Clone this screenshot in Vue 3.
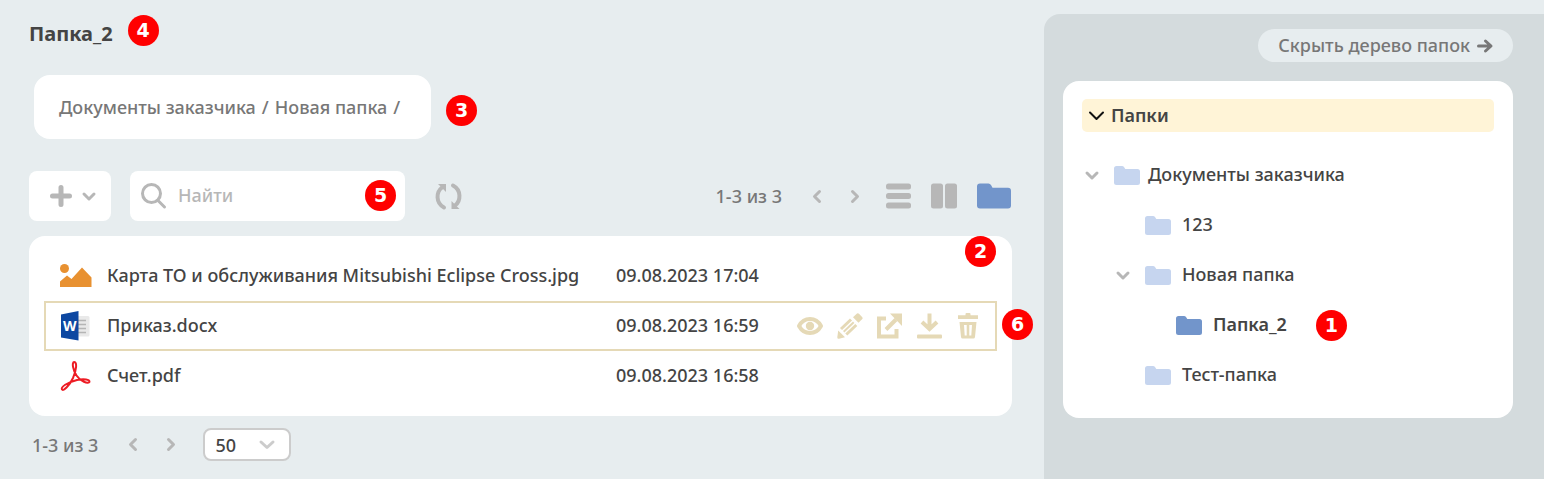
<script setup>
import { ref } from 'vue'

const files = [
  { kind: 'image', name: 'Карта ТО и обслуживания Mitsubishi Eclipse Cross.jpg', date: '09.08.2023 17:04' },
  { kind: 'word', name: 'Приказ.docx', date: '09.08.2023 16:59', active: true },
  { kind: 'pdf', name: 'Счет.pdf', date: '09.08.2023 16:58' },
]

const tree = [
  { name: 'Документы заказчика', level: 1, open: true },
  { name: '123', level: 2 },
  { name: 'Новая папка', level: 2, open: true },
  { name: 'Папка_2', level: 3, current: true, mark: 1 },
  { name: 'Тест-папка', level: 2 },
]

const query = ref('')
const pageSize = ref('50')
</script>

<template>
  <div class="page">
    <main class="main">
      <h1 class="title">Папка_2<span class="mark mark-title">4</span></h1>

      <nav class="crumbs" aria-label="Путь">
        <a href="#">Документы заказчика</a><span>/</span><a href="#">Новая папка</a><span>/</span>
        <b class="mark mark-crumbs">3</b>
      </nav>

      <div class="toolbar">
        <button class="add" type="button" aria-label="Добавить">
          <svg width="22" height="22" viewBox="0 0 22 22"><path d="M11 2.500v17M2.500 11h17" class="ln w5" /></svg>
          <svg width="14" height="9" viewBox="0 0 14 9"><path d="M2 2l5 5 5-5" class="ln w3" /></svg>
        </button>
        <div class="search">
          <svg width="25" height="26" viewBox="0 0 25 26"><circle cx="10.500" cy="10.500" r="9" class="ln w3" /><path d="M17 17.500l6.500 6.500" class="ln w3" /></svg>
          <input v-model="query" type="text" placeholder="Найти" aria-label="Найти" />
          <b class="mark mark-search">5</b>
        </div>
        <button class="icon refresh" type="button" aria-label="Обновить">
          <svg width="27" height="27" viewBox="0 0 27 27">
            <path d="M9 24.500C.500 20 1 9 7 4.500" class="ln w4" /><path d="M3 1H11V9z" class="fl" />
            <path d="M18 2.500C26.500 7 26 18 20 22.500" class="ln w4" /><path d="M16.500 18v8h8z" class="fl" />
          </svg>
        </button>
        <div class="pager">
          <span>1-3 из 3</span>
          <button class="icon" type="button" aria-label="Назад"><svg width="10" height="15" viewBox="0 0 10 15"><path d="M7.500 2.500l-5 5 5 5" class="ln w3" /></svg></button>
          <button class="icon" type="button" aria-label="Вперёд"><svg width="10" height="15" viewBox="0 0 10 15"><path d="M2.500 2.500l5 5-5 5" class="ln w3" /></svg></button>
        </div>
        <div class="views">
          <button class="icon" type="button" aria-label="Список"><svg width="26" height="26" viewBox="0 0 26 26" class="fl"><rect x="1" y=".5" width="25" height="6" rx="2.500" /><rect x="1" y="10" width="25" height="6" rx="2.500" /><rect x="1" y="19.500" width="25" height="6" rx="2.500" /></svg></button>
          <button class="icon" type="button" aria-label="Колонки"><svg width="26" height="26" viewBox="0 0 26 26" class="fl"><rect y=".5" width="12" height="25" rx="2.500" /><rect x="14" y=".5" width="12" height="25" rx="2.500" /></svg></button>
          <button class="icon blue" type="button" aria-label="Папки"><svg width="34" height="26" viewBox="0 0 34 26" class="fl"><path d="M3 .5h8.500q1.500 0 2.500 1.500l1.500 2.800H31q3 0 3 3v14.700q0 3-3 3H3q-3 0-3-3V3.500q0-3 3-3z" /></svg></button>
        </div>
      </div>

      <section class="card">
        <table class="files">
          <tbody>
            <tr v-for="f in files" :key="f.name" :class="{ active: f.active }">
              <td class="c-icon">
                <svg v-if="f.kind === 'image'" width="32" height="32" viewBox="0 0 32 32"><circle cx="4.500" cy="8.500" r="4.500" fill="#e89131" /><path d="M0 27V21.500l7-6 4.500 3.500L22 7.500l9.500 10V27z" fill="#e89131" /></svg>
                <svg v-else-if="f.kind === 'word'" width="32" height="32" viewBox="0 0 32 32">
                  <rect x="14" y="6" width="15.500" height="20.500" rx="1.500" fill="#e9e9e9" />
                  <path d="M18 10.500h8M18 14.500h8M18 18.500h8M18 22.500h8" stroke="#b5b5b5" stroke-width="1.500" />
                  <path d="M1 4.500L18.500 1v29.500L1 27.500z" fill="#0d47a1" />
                  <text x="9.800" y="20.500" text-anchor="middle" class="w-letter">W</text>
                </svg>
                <svg v-else width="32" height="32" viewBox="0 0 32 32"><path d="M2 29.500C.500 27 7 22.500 17 20 24 18.500 30 19.500 29.500 22 28.500 24.500 20 21 16.500 15.500 13 10 11.500 2.200 14.200 2 17.300 2 16.500 10 13 18 9.500 25.500 3.500 31.500 2 29.500z" class="pdf" /></svg>
              </td>
              <td class="c-text">{{ f.name }}</td>
              <td class="c-text c-date">{{ f.date }}</td>
              <td class="c-actions">
                <div v-if="f.active" class="actions">
                  <button class="icon" type="button" aria-label="Просмотр"><svg width="26" height="26" viewBox="0 0 26 26"><path d="M2 13C5 7.500 9 6 13 6s8 1.500 11 7c-3 5.500-7 7-11 7S5 18.500 2 13z" class="ln w4" /><circle cx="13" cy="13" r="4.200" class="fl" /></svg></button>
                  <button class="icon" type="button" aria-label="Изменить"><svg width="26" height="26" viewBox="0 0 26 26"><path d="M16 4.300L20 .5q1-.8 2 .2l3.300 3.600q.8 1 0 1.800L21.500 9.800z" class="fl" /><path d="M14 6.500L4 16M19.300 12L9.300 21.500" class="ln w3 sq" /><path d="M16.700 9.200L6.700 18.700" class="ln w2 sq" /><path d="M1.200 17.500l6.800 6.800-6 1.500q-1.800.3-1.700-1.500z" class="fl" /></svg></button>
                  <button class="icon" type="button" aria-label="Открыть"><svg width="26" height="26" viewBox="1 0 26 26"><path d="M10 5.500H3v18h17.500V16" class="ln w4 sq" /><path d="M10 16.500L20 6.500" class="ln w4 sq" /><path d="M14 .5h12V13z" class="fl" /></svg></button>
                  <button class="icon" type="button" aria-label="Скачать"><svg width="26" height="26" viewBox="1 0 26 26"><path d="M13.500 .5V15M6 9l7.500 7L21 9" class="ln w4 sq" /><rect x="1" y="21.500" width="25" height="4" rx="1" class="fl" /></svg></button>
                  <button class="icon" type="button" aria-label="Удалить"><svg width="26" height="26" viewBox="2 0 26 26" class="fl"><path d="M3 2.300h7.500V1q0-1 1-1h3q1 0 1 1v1.300H23V6H3z" /><path fill-rule="evenodd" d="M4.500 9h17l-1.500 15q-.3 1.500-1.500 1.500h-11Q6.300 25.500 6 24zM9 12l.7 10.500h2V12zM14.300 12v10.500h2L17 12z" /></svg></button>
                </div>
                <b v-if="f.active" class="mark mark-row">6</b>
              </td>
            </tr>
          </tbody>
        </table>
        <b class="mark mark-card">2</b>
      </section>

      <footer class="footer">
        <div class="pager">
          <span>1-3 из 3</span>
          <button class="icon" type="button" aria-label="Назад"><svg width="10" height="15" viewBox="0 0 10 15"><path d="M7.500 2.500l-5 5 5 5" class="ln w3" /></svg></button>
          <button class="icon" type="button" aria-label="Вперёд"><svg width="10" height="15" viewBox="0 0 10 15"><path d="M2.500 2.500l5 5-5 5" class="ln w3" /></svg></button>
        </div>
        <div class="size">
          <select v-model="pageSize" aria-label="Строк на странице">
            <option>50</option>
            <option>100</option>
          </select>
          <svg width="16" height="10" viewBox="0 0 16 10"><path d="M2 2l6 5.500L14 2" class="ln w3" /></svg>
        </div>
      </footer>
    </main>

    <aside class="side">
      <button class="hide" type="button">
        <span class="label">Скрыть дерево папок</span>
        <svg width="16" height="14" viewBox="0 0 16 14"><path d="M1.500 7h12M8.500 2l5.500 5-5.500 5" class="ln w3" /></svg>
      </button>
      <div class="panel">
        <button class="root" type="button">
          <svg width="15" height="10" viewBox="0 0 15 10"><path d="M1 1.500l6.500 6.500L14 1.500" class="ln w2" /></svg>
          <span class="label">Папки</span>
        </button>
        <ul class="tree">
          <li v-for="n in tree" :key="n.name" :class="['level-' + n.level, { current: n.current }]">
            <button v-if="n.open" class="icon toggle" type="button" aria-label="Свернуть"><svg width="14" height="9" viewBox="0 0 14 9"><path d="M2 2l5 5 5-5" class="ln w3" /></svg></button>
            <span v-else class="toggle"></span>
            <a href="#">
              <svg width="26" height="19" viewBox="0 0 26 19" class="fl"><path d="M2.500 0H8q1.300 0 2 1l1.300 2h12.200q2.500 0 2.500 2.500v11q0 2.500-2.500 2.500h-21Q0 19 0 16.500v-14Q0 0 2.500 0z" /></svg>
              <span class="label">{{ n.name }}</span>
            </a>
            <b v-if="n.mark" class="mark mark-node">{{ n.mark }}</b>
          </li>
        </ul>
      </div>
    </aside>
  </div>
</template>

<style>
body {
  background: #e7edef;
}
</style>

<style scoped>
.page {
  box-sizing: border-box;
  display: flex;
  min-height: 100vh;
  padding-top: 14px;
  background: #e7edef;
  color: #444;
  font: 500 18px/24px "Noto Sans", "Open Sans", sans-serif;
}
.page * {
  box-sizing: border-box;
}
svg {
  display: block;
  flex: none;
  overflow: visible;
}
button, input, select {
  font: inherit;
  color: inherit;
  border: 0;
  padding: 0;
  margin: 0;
  background: none;
}
button {
  cursor: pointer;
}
a {
  color: inherit;
  text-decoration: none;
}
.label {
  padding-bottom: 2px;
}
.ln {
  fill: none;
  stroke: currentColor;
  stroke-linecap: round;
  stroke-linejoin: round;
}
.sq {
  stroke-linecap: butt;
  stroke-linejoin: miter;
}
.w2 { stroke-width: 2; }
.w3 { stroke-width: 3; }
.w4 { stroke-width: 4; }
.w5 { stroke-width: 5; }
.fl {
  fill: currentColor;
}
.icon {
  color: #b7b7b7;
}
.blue {
  color: #7295cb;
}

.main {
  flex: 1;
  min-width: 0;
  padding: 6px 32px 16px 29px;
}
.title {
  position: relative;
  width: max-content;
  margin: 0;
  font-size: 20px;
  line-height: 28px;
  font-weight: 700;
}
.crumbs {
  position: relative;
  display: flex;
  align-items: center;
  gap: 6px;
  width: max-content;
  height: 64px;
  margin: 27px 0 0 5px;
  padding: 0 31px 0 25px;
  border-radius: 16px;
  background: #fff;
  color: #777;
}
.toolbar {
  display: flex;
  align-items: center;
  margin-top: 32px;
  height: 50px;
}
.add {
  display: flex;
  align-items: center;
  justify-content: center;
  gap: 10px;
  width: 82px;
  height: 50px;
  margin-right: 19px;
  padding-left: 6px;
  border-radius: 8px;
  background: #fff;
  color: #b7b7b7;
}
.search {
  position: relative;
  display: flex;
  align-items: center;
  gap: 12px;
  width: 275px;
  height: 50px;
  padding: 0 11px;
  border-radius: 8px;
  background: #fff;
  color: #b7b7b7;
}
.search input {
  flex: 1;
  min-width: 0;
  padding-bottom: 2px;
  outline: 0;
}
.search input::placeholder {
  color: #b7b7b7;
  opacity: 1;
}
.refresh {
  margin-left: 30px;
}
.pager {
  display: flex;
  align-items: center;
  gap: 28px;
  color: #777;
}
.toolbar .pager {
  margin-left: auto;
}
.pager span {
  margin-right: 2px;
}
.views {
  display: flex;
  gap: 20px;
  margin: 0 1px 0 25px;
}
.card {
  position: relative;
  margin-top: 15px;
  padding: 15px;
  border-radius: 16px;
  background: #fff;
}
.files {
  width: 100%;
  border-spacing: 0;
}
.files tr {
  position: relative;
}
.files td {
  height: 50px;
  padding: 0;
}
.files .c-text {
  padding-bottom: 2px;
}
.files .active {
  outline: 2px solid #e5d9b6;
  outline-offset: -2px;
}
.files .c-icon {
  width: 63px;
  padding-left: 16px;
}
.c-date {
  width: 181px;
}
.c-actions {
  width: 200px;
}
.actions {
  display: flex;
  gap: 14px;
}
.actions .icon {
  color: #e5d9b6;
}
.w-letter {
  font: 700 14px "Open Sans", sans-serif;
  fill: #fff;
}
.pdf {
  fill: none;
  stroke: #ed1c24;
  stroke-width: 2;
}
.footer {
  display: flex;
  align-items: center;
  margin-top: 12px;
  padding-left: 3px;
}
.size {
  display: grid;
  align-items: center;
  width: 88px;
  margin-left: 27px;
}
.size select, .size svg {
  grid-area: 1 / 1;
}
.size select {
  appearance: none;
  height: 33px;
  padding: 0 10px;
  border: 2px solid #ccc;
  border-radius: 8px;
  background: #fff;
}
.size svg {
  justify-self: end;
  margin-right: 16px;
  color: #ccc;
  pointer-events: none;
}

.side {
  display: flex;
  flex-direction: column;
  width: 500px;
  padding: 15px 31px 15px 19px;
  border-radius: 16px 0 0 0;
  background: #d4dbdd;
}
.hide {
  display: flex;
  align-items: center;
  align-self: flex-end;
  gap: 7px;
  height: 33px;
  padding: 0 20px;
  border-radius: 17px;
  background: #e7edef;
  color: #777;
}
.panel {
  margin-top: 19px;
  padding: 18px 19px;
  border-radius: 16px;
  background: #fff;
}
.root {
  display: flex;
  align-items: center;
  gap: 7px;
  width: 100%;
  height: 33px;
  padding: 0 7px;
  border-radius: 5px;
  background: #fff4d7;
  font-weight: 600;
}
.root svg {
  color: #111;
}
.tree {
  margin: 18px 0 0;
  padding: 0;
  list-style: none;
}
.tree li {
  display: flex;
  align-items: center;
  height: 50px;
}
.toggle {
  width: 14px;
  margin: 0 15px 0 3px;
}
.tree a {
  display: flex;
  align-items: center;
  gap: 11px;
}
.tree .level-1 a {
  gap: 8px;
}
.level-2 {
  padding-left: 31px;
}
.level-3 {
  padding-left: 62px;
}
.tree a svg {
  color: #c6d5ef;
}
.tree .current {
  font-weight: 600;
}
.tree .current svg {
  color: #7295cb;
}

.mark {
  display: flex;
  align-items: center;
  justify-content: center;
  width: 31px;
  height: 31px;
  border-radius: 50%;
  background: #f00;
  color: #fff;
  font: 700 19px/31px "DejaVu Sans", sans-serif;
}
.mark-title, .mark-crumbs, .mark-search, .mark-row, .mark-card {
  position: absolute;
}
.mark-title {
  left: calc(100% + 15px);
  top: -5px;
}
.mark-crumbs {
  left: calc(100% + 15px);
  top: 20px;
}
.mark-search {
  right: 9px;
  top: 9px;
}
.mark-card {
  right: 16px;
  top: 0;
}
.mark-row {
  right: -36px;
  top: 8px;
}
.mark-node {
  margin-left: 29px;
}
</style>
